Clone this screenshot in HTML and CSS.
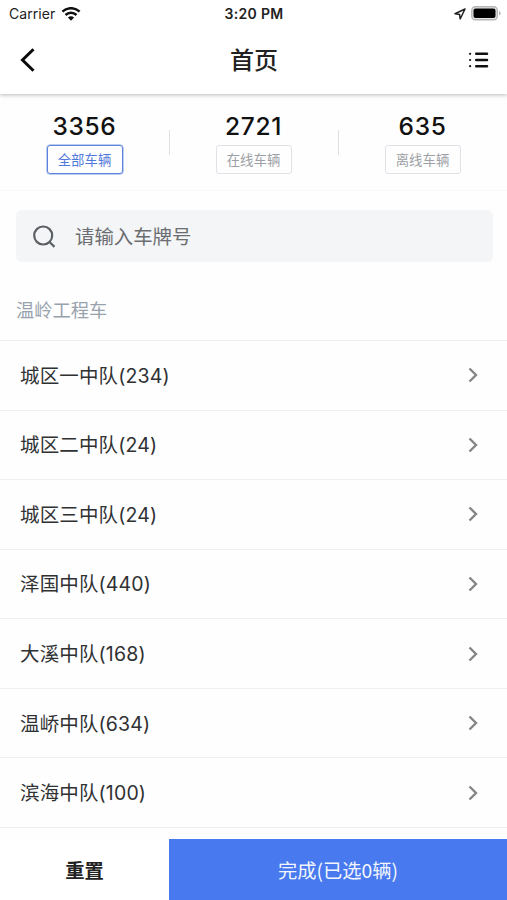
FILE: index.html
```html
<!DOCTYPE html>
<html lang="zh-CN">
<head>
<meta charset="utf-8">
<meta name="viewport" content="width=device-width, initial-scale=1">
<title>首页</title>
<link rel="stylesheet" href="styles.css">
</head>
<body>
<div class="app">
  <header class="header">
    <div class="status">
      <div class="status-left">
        <span>Carrier</span>
        <svg width="20" height="14" viewBox="0 0 20 14" fill="none" stroke="#111" stroke-width="2.5"><path d="M1.4 4.7a12.3 12.3 0 0 1 17.2 0"/><path d="M4.5 8a7.9 7.9 0 0 1 11 0"/><path d="M10 13.8 6.9 10.6a4.5 4.5 0 0 1 6.2 0z" fill="#111" stroke="none"/></svg>
      </div>
      <span class="time">3:20 PM</span>
      <div class="status-right">
        <svg width="12" height="12" viewBox="0 0 12 12" fill="none" stroke="#222" stroke-width="1.5" stroke-linejoin="round"><path d="M11 1 1 5.700l4.600.7.6 4.600z"/></svg>
        <svg width="30" height="15" viewBox="0 0 30 15"><rect x=".8" y=".8" width="25.5" height="13" rx="3.600" fill="#e8e8e8" stroke="#b5b5b5" stroke-width="1.400"/><rect x="2.500" y="2.500" width="22" height="9.600" rx="2" fill="#000"/><path d="M28 5v4.600q1.600-.5 1.600-2.300t-1.600-2.300z" fill="#b5b5b5"/></svg>
      </div>
    </div>
    <nav class="navbar">
      <svg width="16" height="24" viewBox="0 0 16 24" fill="none" stroke="#0b0b0b" stroke-width="3"><path d="M14.500 1.200 3.500 12l11 10.800"/></svg>
      <h1>首页</h1>
      <svg width="20" height="16" viewBox="0 0 20 16" fill="none" stroke="#111" stroke-width="2.500" stroke-linecap="round"><path d="M7.200 1.800h10.800M7.200 8h10.800M7.200 14.200h10.800"/><path d="M1.100 1.800h.01M1.100 8h.01M1.100 14.200h.01" stroke-width="2.200"/></svg>
    </nav>
  </header>

  <section class="stats">
    <div class="stat active"><strong>3356</strong><span class="tag">全部车辆</span></div>
    <div class="stat"><strong>2721</strong><span class="tag">在线车辆</span></div>
    <div class="stat"><strong>635</strong><span class="tag">离线车辆</span></div>
  </section>

  <div class="search">
    <svg width="24" height="24" viewBox="0 0 24 24" fill="none" stroke="#5d6063" stroke-width="2.200"><circle cx="10.200" cy="11.500" r="9"/><path d="m16.500 18 5 4.900"/></svg>
    <span>请输入车牌号</span>
  </div>

  <h2 class="group">温岭工程车</h2>
  <ul class="list">
    <li><span>城区一中队(234)</span><svg class="chev" viewBox="0 0 10 16"><path d="m1.500 1.500 6.500 6.500-6.500 6.500"/></svg></li>
    <li><span>城区二中队(24)</span><svg class="chev" viewBox="0 0 10 16"><path d="m1.500 1.500 6.500 6.500-6.500 6.500"/></svg></li>
    <li><span>城区三中队(24)</span><svg class="chev" viewBox="0 0 10 16"><path d="m1.500 1.500 6.500 6.500-6.500 6.500"/></svg></li>
    <li><span>泽国中队(440)</span><svg class="chev" viewBox="0 0 10 16"><path d="m1.500 1.500 6.500 6.500-6.500 6.500"/></svg></li>
    <li><span>大溪中队(168)</span><svg class="chev" viewBox="0 0 10 16"><path d="m1.500 1.500 6.500 6.500-6.500 6.500"/></svg></li>
    <li><span>温峤中队(634)</span><svg class="chev" viewBox="0 0 10 16"><path d="m1.500 1.500 6.500 6.500-6.500 6.500"/></svg></li>
    <li><span>滨海中队(100)</span><svg class="chev" viewBox="0 0 10 16"><path d="m1.500 1.500 6.500 6.500-6.500 6.500"/></svg></li>
  </ul>

  <footer class="footer">
    <div class="reset">重置</div>
    <div class="done">完成(已选0辆)</div>
  </footer>
</div>
</body>
</html>
```
FILE: styles.css
```css
* { box-sizing: border-box; }

body {
  margin: 0;
  background: #fefefe;
  color: #303133;
  font-family: Inter, "Noto Sans CJK SC", sans-serif;
}

svg { display: block; flex: none; }

.app {
  display: flex;
  flex-direction: column;
  height: 900px;
  overflow: hidden;
}

.header {
  height: 94px;
  flex: none;
  background: #fff;
  box-shadow: 0 1px 4px rgba(0, 0, 0, .28);
}

.status {
  display: grid;
  grid-template-columns: 1fr auto 1fr;
  align-items: center;
  height: 27px;
  padding: 0 6px 0 9px;
  font-size: 14px;
  color: #222;
}

.status-left { display: flex; align-items: center; gap: 6px; }
.status-left span { letter-spacing: .05px; }
.status-right { display: flex; align-items: center; justify-content: flex-end; gap: 5px; }
.time { font-weight: 600; letter-spacing: .35px; margin-right: 2px; }

.navbar {
  display: grid;
  grid-template-columns: 20px 1fr 20px;
  align-items: center;
  height: 65px;
  padding: 0 18px 0 19px;
}

.navbar h1 {
  margin: 0;
  padding-top: 2px;
  text-align: center;
  font-size: 24px;
  line-height: 34px;
  font-weight: 500;
  color: #222;
}

.stats {
  display: grid;
  grid-template-columns: repeat(3, 1fr);
  height: 97px;
  flex: none;
  padding-top: 16px;
  border-bottom: 1px solid #fafafa;
}

.stat {
  display: grid;
  grid-template-rows: 30px 30px;
  gap: 5px;
  justify-items: center;
  position: relative;
}

.stat + .stat::before {
  content: "";
  position: absolute;
  left: 0;
  top: 20px;
  width: 1px;
  height: 25px;
  background: #dddfe2;
}

.stat strong {
  font-size: 24.500px;
  line-height: 33px;
  font-weight: 550;
  letter-spacing: .65px;
  color: #111;
}

.tag {
  width: 76px;
  height: 29px;
  border: 1px solid #dfe2e6;
  border-radius: 3px;
  text-align: center;
  font-size: 13.400px;
  line-height: 28px;
  color: #9da1a7;
}

.active .tag { border-color: #5c82dc; box-shadow: 0 0 0 .5px #7d9be3; color: #5279dc; }

.search {
  display: flex;
  align-items: center;
  gap: 18px;
  flex: none;
  height: 52px;
  margin: 19px 14px 0 16px;
  padding: 0 17px;
  border-radius: 6px;
  background: #f3f5f7;
  font-size: 19.400px;
  color: #6b6d70;
}

.search span { padding-bottom: 2px; }

.group {
  flex: none;
  margin: 34px 16px 0;
  height: 44px;
  font-size: 18.300px;
  line-height: 29px;
  font-weight: 400;
  color: #98a2ad;
}

.list { margin: 0; padding: 0; list-style: none; flex: 1; min-height: 0; }

.list li {
  display: flex;
  align-items: center;
  justify-content: space-between;
  height: 69.570px;
  padding: 0 29px 0 20px;
  border-top: 1px solid #eeeff0;
  font-size: 19.500px;
  letter-spacing: .15px;
}

.list li span { padding-bottom: 2px; }

.list li:last-child { height: 70.570px; border-bottom: 1px solid #eeeff0; }

.chev {
  width: 10px;
  height: 16px;
  fill: none;
  stroke: #858585;
  stroke-width: 2.400;
}

.footer {
  display: grid;
  grid-template-columns: 1fr 2fr;
  flex: none;
  height: 61px;
  padding-top: 0;
  line-height: 63px;
  text-align: center;
  font-family: "Noto Sans CJK SC", sans-serif;
  font-size: 19.300px;
  background: #fff;
}

.reset { font-weight: 600; color: #222; }
.done { background: #4879ee; color: #f2f6ff; }
```
